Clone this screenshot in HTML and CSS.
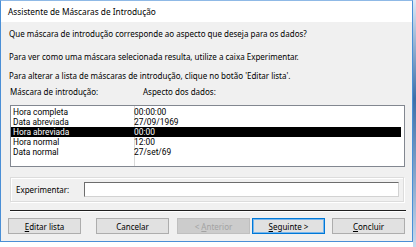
FILE: index.html
```html
<!DOCTYPE html>
<html lang="pt">
<head>
  <meta charset="UTF-8" />
  <title>Assistente de Máscaras de Introdução</title>
  <link rel="stylesheet" href="styles.css">
</head>
<body>
  <div class="screen">
    <div class="dialog">
      <div class="titlebar">Assistente de Máscaras de Introdução</div>
      <div class="content">
        <p class="line first">Que máscara de introdução corresponde ao aspecto que deseja para os dados?</p>
        <p class="line second">Para ver como uma máscara selecionada resulta, utilize a caixa Experimentar.</p>
        <p class="line third">Para alterar a lista de máscaras de introdução, clique no botão 'Editar lista'.</p>

        <div class="headers">
          <span class="col-a">Máscara de introdução:</span>
          <span class="col-b">Aspecto dos dados:</span>
        </div>

        <div class="listbox">
          <div class="row"><span class="col-a">Hora completa</span><span class="col-b">00:00:00</span></div>
          <div class="row"><span class="col-a">Data abreviada</span><span class="col-b">27/09/1969</span></div>
          <div class="row selected"><span class="col-a">Hora abreviada</span><span class="col-b">00:00</span></div>
          <div class="row"><span class="col-a">Hora normal</span><span class="col-b">12:00</span></div>
          <div class="row"><span class="col-a">Data normal</span><span class="col-b">27/set/69</span></div>
        </div>

        <div class="groupbox">
          <label class="try-label" for="tryInput">Experimentar:</label>
          <div class="try-input" id="tryInput"></div>
        </div>

        <div class="separator"></div>

        <div class="buttons">
          <button class="btn"><u>E</u>ditar lista</button>
          <button class="btn gap">Cancelar</button>
          <button class="btn disabled">&lt; <u>A</u>nterior</button>
          <button class="btn default"><u>S</u>eguinte &gt;</button>
          <button class="btn last"><u>C</u>oncluir</button>
        </div>
      </div>
    </div>
    <div class="edge"></div>
  </div>
</body>
</html>
```

FILE: styles.css
```css
* {
  box-sizing: border-box;
  margin: 0;
  padding: 0;
}
body {
  width: 416px;
  height: 247px;
  background: #fff;
  font-family: 'Noto Sans', 'Open Sans', sans-serif;
  font-size: 8px;
  color: #000;
  overflow: hidden;
}
.screen {
  display: flex;
  align-items: flex-start;
}
.dialog {
  width: 413px;
  height: 242px;
  border: 1px solid #4a8fd6;
  border-top-color: #8fb9e6;
  background: #f0f0f0;
  display: flex;
  flex-direction: column;
}
.edge {
  width: 3px;
  height: 247px;
  background: linear-gradient(180deg, #dfe9f5 0%, #3d6fa8 40%, #c9d9ec 100%);
}
.titlebar {
  height: 21px;
  background: #fff;
  padding-left: 7px;
  line-height: 22px;
  font-size: 8.3px;
}
.content {
  flex: 1;
  padding: 0 7px 0 8px;
  display: flex;
  flex-direction: column;
}
.line {
  line-height: 12px;
  white-space: nowrap;
}
.first {
  margin-top: 6px;
}
.second {
  margin-top: 11px;
}
.third {
  margin-top: 7px;
}
.headers {
  display: flex;
  margin-top: 4px;
  line-height: 12px;
  padding-left: 1px;
}
.headers .col-a {
  width: 133px;
}
.listbox {
  margin-top: 7px;
  margin-left: 1px;
  width: 395px;
  height: 62px;
  background: #fff;
  border: 1px solid #828790;
  padding-top: 1px;
  background-image: linear-gradient(90deg, transparent 123px, #d9d9d9 123px, #d9d9d9 124px, transparent 124px);
}
.row {
  display: flex;
  height: 10px;
  line-height: 10px;
  margin-right: 3px;
  font-family: Roboto, 'Noto Sans', sans-serif;
  font-size: 8.4px;
}
.row .col-a {
  width: 123px;
  padding-left: 2px;
}
.row.selected {
  background: #000;
  color: #fff;
}
.groupbox {
  margin-top: 10px;
  margin-left: 1px;
  width: 394px;
  height: 25px;
  border: 1px solid #dcdcdc;
  box-shadow: inset 1px 1px 0 #fff, 1px 1px 0 #fff;
  display: flex;
  align-items: center;
  padding-left: 5px;
}
.try-label {
  width: 68px;
}
.try-input {
  width: 315px;
  height: 15px;
  background: #fff;
  border: 1px solid #d2d2d2;
  border-top-color: #6d6d6d;
  border-left-color: #6d6d6d;
}
.separator {
  margin-top: 8px;
  margin-left: 1px;
  width: 396px;
  height: 2px;
  border-top: 1px solid #1e1e1e;
  border-bottom: 1px solid #fff;
}
.buttons {
  display: flex;
  margin-top: 6px;
  margin-left: -1px;
}
.btn {
  font-family: inherit;
  font-size: inherit;
  color: #000;
  width: 74px;
  height: 16px;
  background: #e1e1e1;
  border: 1px solid #adadad;
}
.btn u {
  text-decoration-thickness: 1px;
}
.btn.gap {
  margin-left: 15px;
}
.btn.disabled {
  margin-left: 8px;
  background: #cccccc;
  border-color: #bfbfbf;
  color: #a3a3a3;
}
.btn.default {
  margin-left: 2px;
  border: 1px solid #0078d7;
  box-shadow: inset 0 0 0 1px #79b7ec;
}
.btn.last {
  margin-left: 7px;
}
```
